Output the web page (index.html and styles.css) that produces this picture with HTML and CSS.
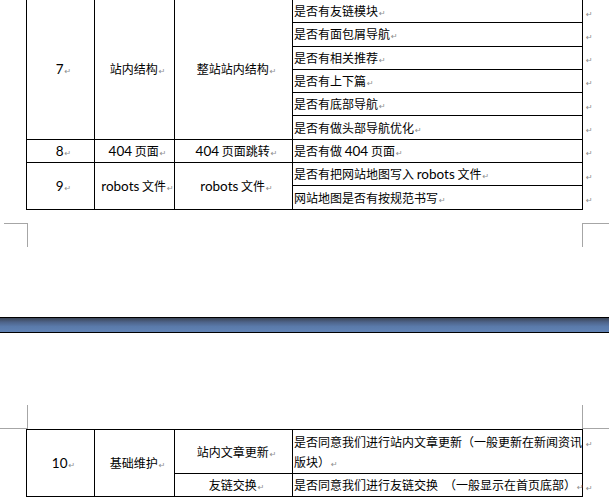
FILE: index.html
```html
<!DOCTYPE html>
<html lang="zh-CN">
<head>
<meta charset="utf-8">
<title>SEO 检查表</title>
<link rel="stylesheet" href="styles.css">
</head>
<body>
<div class="page page-top">
  <table class="doc doc-top">
    <colgroup>
      <col class="c1"><col class="c2"><col class="c3"><col class="c4"><col class="c5">
    </colgroup>
    <tbody>
      <tr>
        <td class="ctr" rowspan="6"><span class="en">7</span><span class="pm"></span></td>
        <td class="ctr" rowspan="6">站内结构<span class="pm"></span></td>
        <td class="ctr" rowspan="6">整站站内结构<span class="pm"></span></td>
        <td class="txt">是否有友链模块<span class="pm"></span></td>
        <td class="eor"><span class="pm"></span></td>
      </tr>
      <tr>
        <td class="txt">是否有面包屑导航<span class="pm"></span></td>
        <td class="eor"><span class="pm"></span></td>
      </tr>
      <tr>
        <td class="txt">是否有相关推荐<span class="pm"></span></td>
        <td class="eor"><span class="pm"></span></td>
      </tr>
      <tr>
        <td class="txt">是否有上下篇<span class="pm"></span></td>
        <td class="eor"><span class="pm"></span></td>
      </tr>
      <tr>
        <td class="txt">是否有底部导航<span class="pm"></span></td>
        <td class="eor"><span class="pm"></span></td>
      </tr>
      <tr>
        <td class="txt">是否有做头部导航优化<span class="pm"></span></td>
        <td class="eor"><span class="pm"></span></td>
      </tr>
      <tr>
        <td class="ctr"><span class="en">8</span><span class="pm"></span></td>
        <td class="ctr"><span class="en">404</span> 页面<span class="pm"></span></td>
        <td class="ctr"><span class="en">404</span> 页面跳转<span class="pm"></span></td>
        <td class="txt">是否有做 <span class="en">404</span> 页面<span class="pm"></span></td>
        <td class="eor"><span class="pm"></span></td>
      </tr>
      <tr>
        <td class="ctr" rowspan="2"><span class="en">9</span><span class="pm"></span></td>
        <td class="ctr" rowspan="2"><span class="en">robots</span> 文件<span class="pm"></span></td>
        <td class="ctr" rowspan="2"><span class="en">robots</span> 文件<span class="pm"></span></td>
        <td class="txt">是否有把网站地图写入 <span class="en">robots</span> 文件<span class="pm"></span></td>
        <td class="eor"><span class="pm"></span></td>
      </tr>
      <tr>
        <td class="txt">网站地图是否有按规范书写<span class="pm"></span></td>
        <td class="eor"><span class="pm"></span></td>
      </tr>
    </tbody>
  </table>
  <div class="marks marks-top">
    <span class="mk mk-tl"></span>
    <span class="mk mk-tr"></span>
  </div>
</div>
<div class="page-gap"></div>
<div class="page page-bottom">
  <div class="marks marks-bottom">
    <span class="mk mk-bl"></span>
    <span class="mk mk-br"></span>
  </div>
  <table class="doc doc-bottom">
    <colgroup>
      <col class="c1"><col class="c2"><col class="c3"><col class="c4"><col class="c5">
    </colgroup>
    <tbody>
      <tr class="tall">
        <td class="ctr" rowspan="2"><span class="en">10</span><span class="pm"></span></td>
        <td class="ctr" rowspan="2">基础维护<span class="pm"></span></td>
        <td class="ctr">站内文章更新<span class="pm"></span></td>
        <td class="txt wrap">是否同意我们进行站内文章更新（一般更新在新闻资讯版块）<span class="pm"></span></td>
        <td class="eor"><span class="pm"></span></td>
      </tr>
      <tr class="short">
        <td class="ctr">友链交换<span class="pm"></span></td>
        <td class="txt">是否同意我们进行友链交换　（一般显示在首页底部）<span class="pm"></span></td>
        <td class="eor"><span class="pm"></span></td>
      </tr>
    </tbody>
  </table>
</div>
</body>
</html>
```

FILE: styles.css
```css
html, body {
  margin: 0;
  padding: 0;
  background: #ffffff;
}

body {
  width: 609px;
  height: 500px;
  overflow: hidden;
  font-family: "Noto Sans CJK SC", sans-serif;
  font-size: 12px;
  color: #000;
}

.page-top {
  height: 317px;
  overflow: hidden;
}

.page-gap {
  height: 14px;
  border-top: 1px solid #000;
  border-bottom: 1px solid #000;
  background: linear-gradient(#3b4658 0%, #4e648a 30%, #5a7aaa 60%, #6183b5 100%);
}

.doc {
  border-collapse: collapse;
  table-layout: fixed;
  margin-left: 26px;
  width: 583px;
}

.doc-top {
  margin-top: -1px;
}

.c1 { width: 68px; }
.c2 { width: 80px; }
.c3 { width: 118px; }
.c4 { width: 290px; }
.c5 { width: 27px; }

.doc td {
  padding: 0;
  line-height: 18px;
  white-space: nowrap;
  overflow: visible;
}

.doc td.ctr,
.doc td.txt {
  border: 1px solid #000;
}

.doc-top tr {
  height: 23.3px;
}

.doc td.ctr {
  text-align: center;
  vertical-align: middle;
  padding-left: 6px;
}

.doc td.txt {
  vertical-align: middle;
  padding: 2px 0 2px 1px;
}

.doc-bottom td.txt {
  vertical-align: top;
  padding: 2px 0 1px 1px;
}

.doc-bottom td.txt.wrap {
  white-space: normal;
  line-height: 20px;
}

.doc-bottom tr.tall {
  height: 44px;
}

.doc-bottom tr.short {
  height: 23px;
}

.doc td.eor {
  border: none;
  vertical-align: top;
  padding: 3px 0 0 2px;
}

.en {
  font-family: "Lato", sans-serif;
  font-size: 13.5px;
  line-height: 0;
}

.pm {
  line-height: 0;
}

.pm::after {
  content: "\21B5";
  font-family: "DejaVu Sans", sans-serif;
  font-size: 8px;
  line-height: 0;
  color: #8c8c8c;
  margin-left: 1px;
}

.marks {
  display: flex;
  justify-content: space-between;
}

.marks-top {
  margin-top: 13px;
}

.marks-bottom {
  margin-top: 72px;
}

.mk {
  display: block;
  height: 23px;
}

.mk-tl {
  margin-left: 4px;
  width: 23px;
  border-top: 1px solid #a6a6a6;
  border-right: 1px solid #a6a6a6;
}

.mk-tr {
  width: 26px;
  border-top: 1px solid #a6a6a6;
  border-left: 1px solid #a6a6a6;
}

.mk-bl {
  width: 27px;
  border-bottom: 1px solid #a6a6a6;
  border-right: 1px solid #a6a6a6;
}

.mk-br {
  width: 26px;
  border-bottom: 1px solid #a6a6a6;
  border-left: 1px solid #a6a6a6;
}
```
